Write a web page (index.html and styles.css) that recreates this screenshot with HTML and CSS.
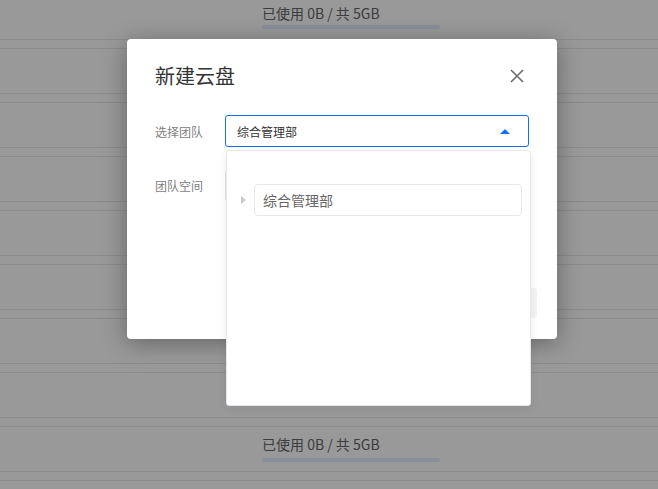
FILE: index.html
```html
<!DOCTYPE html>
<html lang="zh-CN">
<head>
  <meta charset="UTF-8">
  <title>新建云盘</title>
  <meta name="viewport" content="width=device-width, initial-scale=1.0">
  <link rel="stylesheet" href="styles.css">
</head>
<body>
  <div class="page">
    <div class="usage usage-top">
      <div class="usage-text">已使用 0B / 共 5GB</div>
      <div class="usage-bar"></div>
    </div>
    <div class="usage usage-bottom">
      <div class="usage-text">已使用 0B / 共 5GB</div>
      <div class="usage-bar"></div>
    </div>
  </div>

  <div class="mask"></div>

  <div class="modal">
    <div class="modal-header">
      <span class="modal-title">新建云盘</span>
      <span class="modal-close">
        <svg width="14" height="14" viewBox="0 0 14 14">
          <path d="M1 1 L13 13 M13 1 L1 13" stroke="#6b6b6b" stroke-width="1.6" fill="none"/>
        </svg>
      </span>
    </div>

    <div class="form-item">
      <label class="form-label">选择团队</label>
      <div class="select is-open">
        <span class="select-value">综合管理部</span>
        <span class="select-arrow"></span>
      </div>
    </div>

    <div class="form-item form-item-space">
      <label class="form-label">团队空间</label>
      <div class="space-field"></div>
    </div>

    <div class="modal-footer">
      <button type="button" class="btn btn-primary">确定</button>
      <button type="button" class="btn btn-default">取消</button>
    </div>
  </div>

  <div class="dropdown">
    <div class="tree-node">
      <span class="tree-caret"></span>
      <div class="tree-label">综合管理部</div>
    </div>
  </div>
</body>
</html>
```

FILE: styles.css
```css
body {
  margin: 0;
  padding: 0;
  width: 658px;
  height: 489px;
  overflow: hidden;
  position: relative;
  font-family: "Noto Sans CJK SC", "Noto Sans", sans-serif;
  background: #fff;
}
.page {
  height: 489px;
  background-color: #fff;
  background-image: repeating-linear-gradient(
    to bottom,
    #e9e9e9 0, #e9e9e9 1px,
    transparent 1px, transparent 9px,
    #e9e9e9 9px, #e9e9e9 10px,
    transparent 10px, transparent 54px
  );
  background-position: 0 39px;
  background-repeat: repeat-x;
  background-size: 100% 450px;
  display: flex;
  flex-direction: column;
}
.usage {
  padding-left: 262px;
}
.usage-top {
  padding-top: 3px;
}
.usage-bottom {
  margin-top: 405px;
}
.usage-text {
  font-size: 14px;
  line-height: 20px;
  color: #666;
}
.usage-bar {
  width: 178px;
  height: 4px;
  border-radius: 2px;
  background: #e6edff;
  margin-top: 2px;
}
.usage-bottom .usage-bar {
  margin-top: 4px;
}
.mask {
  position: absolute;
  left: 0;
  top: 0;
  right: 0;
  bottom: 0;
  background: rgba(0, 0, 0, 0.4);
}
.modal {
  position: absolute;
  left: 127px;
  top: 39px;
  width: 430px;
  height: 300px;
  box-sizing: border-box;
  background: #fff;
  border-radius: 4px;
  box-shadow: 0 4px 24px rgba(0, 0, 0, 0.35);
  display: flex;
  flex-direction: column;
  padding: 24px 28px 21px 28px;
}
.modal-header {
  display: flex;
  justify-content: space-between;
  align-items: center;
  height: 26px;
  margin-bottom: 26px;
}
.modal-title {
  font-size: 20px;
  line-height: 26px;
  color: #333;
}
.modal-close {
  display: flex;
  margin-right: 5px;
}
.form-item {
  display: flex;
  align-items: center;
}
.form-item-space {
  margin-top: 23px;
  align-items: flex-start;
}
.form-label {
  width: 70px;
  font-size: 12px;
  color: #808080;
}
.form-item-space .form-label {
  line-height: 32px;
}
.select {
  width: 304px;
  height: 32px;
  box-sizing: border-box;
  border: 1px solid #dcdfe6;
  border-radius: 3px;
  display: flex;
  align-items: center;
  justify-content: space-between;
  padding: 0 18px 0 11px;
}
.select.is-open {
  border-color: #1570ef;
}
.select-value {
  font-size: 12px;
  color: #333;
}
.select-arrow {
  width: 0;
  height: 0;
  border-left: 5px solid transparent;
  border-right: 5px solid transparent;
  border-bottom: 5px solid #1570ef;
}
.space-field {
  width: 304px;
  height: 32px;
  box-sizing: border-box;
  border: 1px solid #e4e4e4;
  border-radius: 3px;
}
.modal-footer {
  margin-top: auto;
  margin-right: -8px;
  display: flex;
  justify-content: flex-end;
  gap: 10px;
}
.btn {
  height: 30px;
  padding: 0 18px;
  border: none;
  border-radius: 3px;
  font-size: 12px;
  font-family: inherit;
  cursor: pointer;
}
.btn-primary {
  background: #1570ef;
  color: #fff;
}
.btn-default {
  background: #f4f4f5;
  color: #666;
}
.dropdown {
  position: absolute;
  left: 226px;
  top: 150px;
  width: 305px;
  height: 256px;
  box-sizing: border-box;
  background: #fff;
  border: 1px solid #e4e7ed;
  border-radius: 3px;
  box-shadow: 0 2px 10px rgba(0, 0, 0, 0.08);
  padding: 33px 8px 0 14px;
}
.tree-node {
  display: flex;
  align-items: center;
}
.tree-caret {
  width: 0;
  height: 0;
  border-top: 4.5px solid transparent;
  border-bottom: 4.5px solid transparent;
  border-left: 5px solid #c8c8c8;
  margin-right: 8px;
}
.tree-label {
  flex: 1;
  height: 32px;
  box-sizing: border-box;
  border: 1px solid #e6e6e6;
  border-radius: 4px;
  padding-left: 8px;
  font-size: 14px;
  line-height: 30px;
  color: #666;
}
```
